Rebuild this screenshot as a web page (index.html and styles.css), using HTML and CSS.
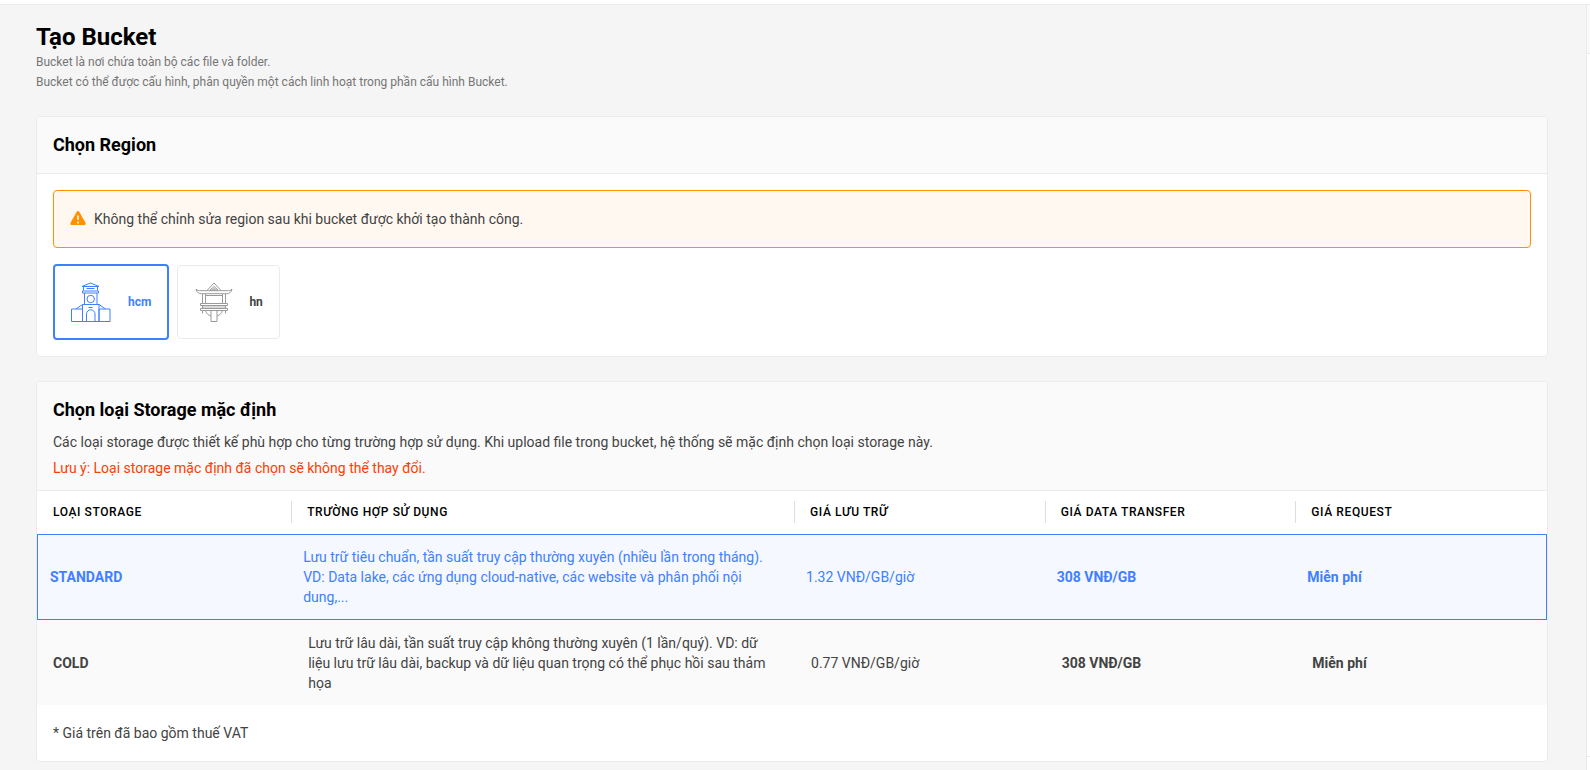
FILE: index.html
```html
<!DOCTYPE html>
<html lang="vi">

<head>
    <meta charset="UTF-8">
    <title>Tạo Bucket</title>
    <link rel="stylesheet" href="styles.css">
</head>

<body>
    <header class="topbar"></header>
    <div class="layout">
        <main class="content">
            <div class="page-title">
                <h1>Tạo Bucket</h1>
                <p>Bucket là nơi chứa toàn bộ các file và folder.</p>
                <p>Bucket có thể được cấu hình, phân quyền một cách linh hoạt trong phần cấu hình Bucket.</p>
            </div>

            <section class="card">
                <div class="card-head">
                    <h2>Chọn Region</h2>
                </div>
                <div class="card-body">
                    <div class="alert" role="alert">
                        <svg viewBox="0 0 16 16" width="16" height="16">
                            <path d="M8 0c.5 0 .9.2 1.200.7l6.300 11c.5.9 0 2.300-1.200 2.300H1.700c-1.200 0-1.700-1.400-1.200-2.300l6.300-11C7.100.2 7.500 0 8 0z" fill="#ff9100" />
                            <path d="M8 4.500v4.500M8 10.500v2" stroke="#fff8f1" stroke-width="1.600" />
                        </svg>
                        <span>Không thể chỉnh sửa region sau khi bucket được khởi tạo thành công.</span>
                    </div>

                    <div class="regions">
                        <button type="button" class="region active">
                            <svg viewBox="0 0 41 40" width="41" height="40" fill="none" stroke="currentColor">
                                <path d="M11 4.500L19.500 1l8.500 3.500zM12.500 4.500v4M26.500 4.500v4M15.500 6.500h8M11.500 9h16v2h-16zM13.500 11v11.500M26 11v11.500M11.500 39.500v-17h16.500v17M11.500 22.500L5 27M28 22.500l6.500 4.500M.5 27h11v12.500H.5zM28 27h11v12.500H28zM11.500 39.500H28M17.500 25.500h4M15.500 39.500V32a4 4 0 0 1 8.500 0v7.500" />
                                <circle cx="19.700" cy="17" r="3.700" />
                            </svg>
                            <span>hcm</span>
                        </button>
                        <button type="button" class="region">
                            <svg viewBox="0 0 39 40" width="39" height="40" fill="none" stroke="#9a9a9a">
                                <path d="M13 8.500L20 1l7 7.500M16 8l4-3.500L24 8zM18.500 7h3" />
                                <path d="M2 7c1 1.500 3 1.700 5 1.700h26c2 0 4-.2 5-1.700-.5 3-2.500 4.700-5.500 4.700h-25C4.500 11.700 2.500 10 2 7z" />
                                <path d="M8.500 12v9.500M11.500 12v9.500M28.500 12v9.500M31.500 12v9.500M11.500 13.500h17" />
                                <path d="M8.500 23.500h23v3h-23z" fill="#d9d9d9" />
                                <path d="M6.500 21.500h27v2h-27zM6.500 26.500h27v2h-27z" fill="#fff" />
                                <path d="M8.500 28.500v3M31.500 28.500v3M11.500 28.500c.5 2.500 2.500 4.500 5.500 5.500M28.500 28.500c-.5 2.500-2.500 4.500-5.500 5.500M17 28.500v11h6v-11" />
                            </svg>
                            <span>hn</span>
                        </button>
                    </div>
                </div>
            </section>

            <section class="card">
                <div class="card-head card-head-text">
                    <h2>Chọn loại Storage mặc định</h2>
                    <p>Các loại storage được thiết kế phù hợp cho từng trường hợp sử dụng. Khi upload file trong bucket, hệ thống sẽ mặc định chọn loại storage này.</p>
                    <p class="warn">Lưu ý: Loại storage mặc định đã chọn sẽ không thể thay đổi.</p>
                </div>
                <table class="storage">
                    <colgroup>
                        <col class="col-type">
                        <col class="col-usage">
                        <col>
                        <col>
                        <col>
                    </colgroup>
                    <thead>
                        <tr>
                            <th>LOẠI STORAGE</th>
                            <th>TRƯỜNG HỢP SỬ DỤNG</th>
                            <th>GIÁ LƯU TRỮ</th>
                            <th>GIÁ DATA TRANSFER</th>
                            <th>GIÁ REQUEST</th>
                        </tr>
                    </thead>
                    <tbody>
                        <tr class="selected">
                            <td><b>STANDARD</b></td>
                            <td>Lưu trữ tiêu chuẩn, tần suất truy cập thường xuyên (nhiều lần trong tháng). VD: Data lake, các ứng dụng cloud-native, các website và phân phối nội dung,...</td>
                            <td>1.32 VNĐ/GB/giờ</td>
                            <td><b>308 VNĐ/GB</b></td>
                            <td><b>Miễn phí</b></td>
                        </tr>
                        <tr>
                            <td><b>COLD</b></td>
                            <td>Lưu trữ lâu dài, tần suất truy cập không thường xuyên (1 lần/quý). VD: dữ liệu lưu trữ lâu dài, backup và dữ liệu quan trọng có thể phục hồi sau thảm họa</td>
                            <td>0.77 VNĐ/GB/giờ</td>
                            <td><b>308 VNĐ/GB</b></td>
                            <td><b>Miễn phí</b></td>
                        </tr>
                    </tbody>
                </table>
                <p class="note">* Giá trên đã bao gồm thuế VAT</p>
            </section>
        </main>
        <aside class="side">
            <div class="side-head"></div>
            <div class="side-body"></div>
            <div class="side-foot"></div>
        </aside>
    </div>
</body>

</html>
```
FILE: styles.css
```css
* {
    box-sizing: border-box;
}

body {
    margin: 0;
    min-height: 100vh;
    display: flex;
    flex-direction: column;
    background: #f5f5f5;
    color: #434343;
    font-family: Roboto, "Liberation Sans", sans-serif;
    font-size: 14px;
    line-height: 20px;
}

h1,
h2,
p {
    margin: 0;
}

.topbar {
    height: 5px;
    background: #fff;
    border-bottom: 1px solid #ebebeb;
}

.layout {
    display: flex;
    flex: 1;
}

.content {
    flex: 1;
    padding: 17px 38px 8px 36px;
}

.page-title {
    margin-bottom: 24px;
}

.page-title h1 {
    color: #000;
    font-size: 24px;
    line-height: 30px;
}

.page-title p {
    color: #757575;
    font-size: 12px;
}

.card {
    background: #fff;
    border: 1px solid #ebebeb;
    border-radius: 4px;
    overflow: hidden;
}

.card + .card {
    margin-top: 24px;
}

.card-head {
    padding: 16px;
    background: #fafafa;
    border-bottom: 1px solid #ebebeb;
}

.card-head h2 {
    color: #000;
    font-size: 18px;
    line-height: 24px;
}

.card-head-text {
    padding-bottom: 9px;
}

.card-head-text h2 {
    margin-bottom: 7px;
}

.card-head-text p {
    line-height: 26px;
}

.card-head-text .warn {
    color: #ff3d00;
}

.card-body {
    padding: 16px;
}

.alert {
    display: flex;
    align-items: center;
    gap: 8px;
    padding: 16px;
    background: #fff8f1;
    border: 1px solid #ff9100;
    border-radius: 4px;
    line-height: 24px;
}

.regions {
    display: flex;
    align-items: center;
    gap: 8px;
    margin-top: 16px;
}

.region {
    display: flex;
    align-items: center;
    gap: 16px;
    padding: 16px;
    background: #fff;
    border: 1px solid #ebebeb;
    border-radius: 4px;
    color: #434343;
    font: bold 12px/20px Roboto, "Liberation Sans", sans-serif;
    cursor: pointer;
}

.region.active {
    border: 2px solid #4080ff;
    color: #4080ff;
}

.storage {
    width: 100%;
    table-layout: fixed;
    border-collapse: collapse;
}

.col-type {
    width: 16.9%;
}

.col-usage {
    width: 33.3%;
}

.storage th {
    position: relative;
    height: 43px;
    padding: 0 15px;
    border-bottom: 1px solid #ebebeb;
    color: #000;
    font-size: 12px;
    font-weight: 500;
    letter-spacing: 0.05em;
    text-align: left;
}

.storage th:first-child {
    padding-left: 16px;
}

.storage th:not(:last-child)::after {
    content: "";
    position: absolute;
    top: 10px;
    right: 0;
    width: 1px;
    height: 22px;
    background: #dedede;
}

.storage td {
    height: 85px;
    padding: 12px 16px;
    background: #fafafa;
}

.storage .selected {
    outline: 1px solid #4080ff;
    outline-offset: -1px;
}

.storage .selected td {
    height: 86px;
    padding-left: 11px;
    background: #f5f8ff;
    color: #4080ff;
}

.storage .selected td:first-child {
    padding-left: 13px;
}

.note {
    padding: 16px;
    line-height: 24px;
}

.side {
    display: flex;
    flex-direction: column;
    width: 4px;
    background: #fff;
    border-left: 1px solid #ebebeb;
}

.side-head {
    height: 49px;
    background: #fafafa;
    border-bottom: 1px solid #ebebeb;
}

.side-body {
    flex: 1;
}

.side-foot {
    height: 14px;
    border-top: 1px solid #ebebeb;
}
```
